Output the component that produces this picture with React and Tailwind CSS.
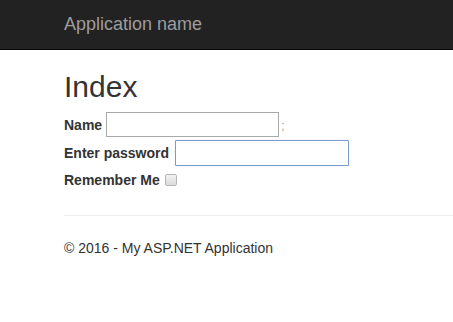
import React from 'react';

export default function App() {
  return (
    <div className="min-h-[322px] bg-white text-[#333] font-['Liberation_Sans',Arial,sans-serif] text-[14px] leading-[20px]">
      <nav className="h-[50px] bg-[#222] border-b border-[#080808]">
        <div className="pl-[64px] pt-[14px]">
          <span className="text-[18px] leading-[20px] text-[#9d9d9d]">Application name</span>
        </div>
      </nav>

      <div className="px-[64px] overflow-hidden">
        <h2 className="mt-[20px] mb-[9px] text-[30px] leading-[33px] font-normal">Index</h2>

        <div className="flex flex-col">
          <div className="flex items-center h-[25px]">
            <label className="font-bold">Name</label>
            <input
              type="text"
              className="ml-[4px] w-[173px] h-[25px] border border-[#a9a9a9] bg-white outline-none"
            />
            <span className="ml-[2px] mt-[2px] text-[#999] text-[12px]">;</span>
          </div>

          <div className="flex items-center h-[26px] mt-[3px]">
            <label className="font-bold">Enter password</label>
            <input
              type="password"
              className="ml-[6px] w-[174px] h-[26px] border border-[#7b9ad0] rounded-[1px] bg-white outline-none shadow-[0_0_1px_#a9c0e8]"
            />
          </div>

          <div className="flex items-center h-[20px] mt-[4px]">
            <label className="font-bold">Remember Me</label>
            <input
              type="checkbox"
              className="appearance-none ml-[5px] w-[12px] h-[12px] border border-[#b5b5b5] rounded-[2px] bg-gradient-to-b from-[#f2f2f2] to-[#dcdcdc]"
            />
          </div>
        </div>

        <hr className="mt-[25px] border-t border-[#eee] mr-[-64px]" />

        <footer className="pt-[22px]">
          <p>© 2016 - My ASP.NET Application</p>
        </footer>
      </div>
    </div>
  );
}
